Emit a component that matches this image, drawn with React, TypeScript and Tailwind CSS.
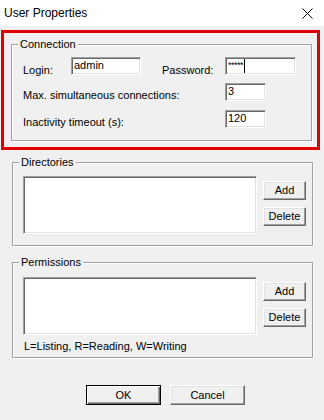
import React from "react";

const sunken =
  "border border-t-[#a0a0a0] border-l-[#a0a0a0] border-b-white border-r-white bg-white shadow-[inset_1px_1px_0_#696969,inset_-1px_-1px_0_#e3e3e3]";
const raised =
  "border border-t-white border-l-white border-b-[#696969] border-r-[#696969] bg-[#f0f0f0] shadow-[inset_-1px_-1px_0_#a0a0a0,inset_1px_1px_0_#e3e3e3]";
const group =
  "border border-[#a0a0a0] shadow-[inset_1px_1px_0_#ffffff,1px_1px_0_#ffffff]";

function Field({ value, width, caret }: { value: string; width: string; caret?: boolean }) {
  return (
    <div className={`${sunken} ${width} h-[18px] flex items-start pl-[2px] pt-[1px] leading-[13px] text-black`}>
      <span className={caret ? "text-[9px] tracking-[-0.5px]" : ""}>{value}</span>
      {caret && <span className="ml-[1px] w-px h-[14px] bg-black" />}
    </div>
  );
}

function Btn({ label }: { label: string }) {
  return (
    <button className={`${raised} w-[43px] h-[19px] flex items-center justify-center leading-none text-black`}>
      {label}
    </button>
  );
}

function ListGroup({ title, note }: { title: string; note?: string }) {
  return (
    <fieldset className={`${group} ml-[12px] w-[301px]`}>
      <legend className="ml-[6px] px-[2px] bg-[#f0f0f0] leading-[13px]">{title}</legend>
      <div className={`pl-[10px] ${note ? "pt-[8px] pb-[4px]" : "pt-[7px] pb-[11px]"}`}>
        <div className="flex">
          <div className={`${sunken} w-[234px] h-[58px]`} />
          <div className="ml-[6px] mt-[5px] flex flex-col gap-[7px]">
            <Btn label="Add" />
            <Btn label="Delete" />
          </div>
        </div>
        {note && <div className="mt-[5px] pl-px leading-[13px]">{note}</div>}
      </div>
    </fieldset>
  );
}

export default function App() {
  return (
    <div className="w-[324px] h-[420px] bg-[#f0f0f0] text-[11px] text-black font-['Liberation_Sans',Arial,sans-serif] overflow-hidden">
      <div className="h-[26px] bg-white flex items-center justify-between pl-[4px] pr-[11px]">
        <span className="text-[12px] leading-none">User Properties</span>
        <svg width="11" height="11" viewBox="0 0 11 11">
          <path d="M0.5 0.5 L10.5 10.5 M10.5 0.5 L0.5 10.5" stroke="#000" strokeWidth="1" />
        </svg>
      </div>

      <div className="mt-[4px] ml-[1px] w-[319px] border-[3px] border-[#e00000] pl-[7px] pt-[5px] pb-[6px]">
        <fieldset className={`${group} w-[301px]`}>
          <legend className="ml-[6px] px-[2px] bg-[#f0f0f0] leading-[13px]">Connection</legend>
          <div className="pl-[11px] pt-[6px] pb-[12px]">
            <div className="flex items-center h-[18px]">
              <span className="w-[48px] pt-[8px]">Login:</span>
              <Field value="admin" width="w-[70px]" />
              <span className="ml-[21px] w-[63px] pt-[8px]">Password:</span>
              <Field value="*****" width="w-[71px]" caret />
            </div>
            <div className="flex items-center h-[18px] mt-[8px]">
              <span className="w-[202px] pt-[6px]">Max. simultaneous connections:</span>
              <Field value="3" width="w-[41px]" />
            </div>
            <div className="flex items-center h-[18px] mt-[9px]">
              <span className="w-[202px] pt-[6px]">Inactivity timeout (s):</span>
              <Field value="120" width="w-[41px]" />
            </div>
          </div>
        </fieldset>
      </div>

      <div className="mt-[6px]">
        <ListGroup title="Directories" />
      </div>
      <div className="mt-[10px]">
        <ListGroup title="Permissions" note="L=Listing, R=Reading, W=Writing" />
      </div>

      <div className="mt-[27px] flex justify-center gap-[9px] pl-[7px]">
        <button className="w-[75px] h-[20px] border border-black bg-[#f0f0f0] shadow-[inset_1px_1px_0_#ffffff,inset_-1px_-1px_0_#696969,inset_-2px_-2px_0_#a0a0a0] flex items-center justify-center leading-none">
          OK
        </button>
        <button className={`${raised} w-[75px] h-[20px] flex items-center justify-center leading-none`}>
          Cancel
        </button>
      </div>
    </div>
  );
}
